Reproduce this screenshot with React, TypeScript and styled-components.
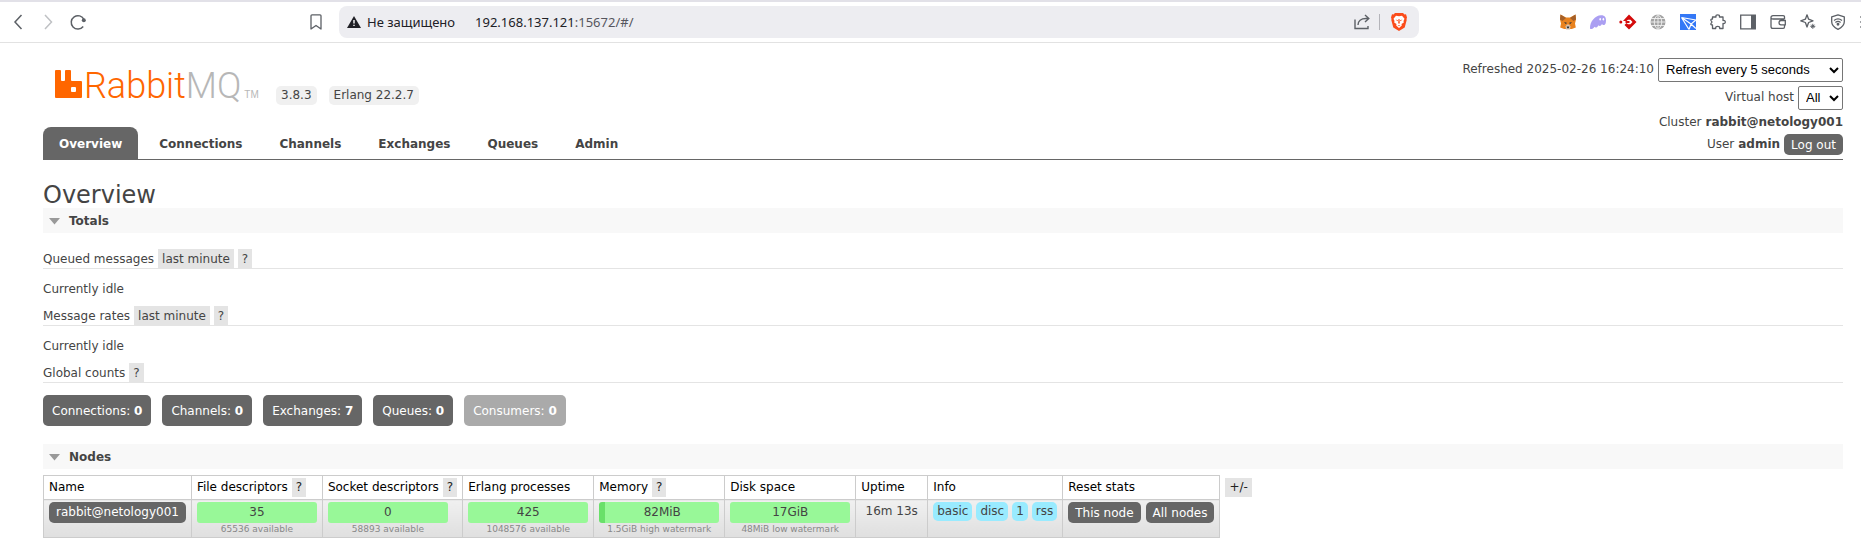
import React from "react";
import styled, { createGlobalStyle, css } from "styled-components";

const GlobalStyle = createGlobalStyle`
  *, *::before, *::after { box-sizing: border-box; }
  body {
    margin: 0;
    background: #fff;
    color: #444;
    font: 12px/19px Verdana, "DejaVu Sans", sans-serif;
  }
  button, select { font: inherit; margin: 0; }
  h1, h2, h3, p { margin: 0; font-weight: normal; }
`;

/* Browser toolbar */

const Toolbar = styled.div`
  display: flex;
  align-items: center;
  height: 43px;
  padding-left: 8px;
  border-top: 2px solid #e2e1e8;
  border-bottom: 1px solid #e2e2e2;
  background: #fff;
  overflow: hidden;
`;

const NavGroup = styled.div`
  display: flex;
  gap: 10px;
  flex: 0 0 auto;
`;

const IconButton = styled.button`
  display: flex;
  align-items: center;
  justify-content: center;
  flex: 0 0 auto;
  width: 20px;
  height: 20px;
  padding: 0;
  border: 0;
  background: none;
  color: #5c6066;
  &:disabled { color: #bfc1c4; }
`;

const AddressArea = styled.div`
  display: flex;
  flex: 0 1 1113px;
  align-items: center;
  gap: 13px;
  min-width: 0;
  margin-left: auto;
`;

const AddressBar = styled.div`
  display: flex;
  flex: 1;
  align-items: center;
  height: 32px;
  padding: 0 10px 0 8px;
  border-radius: 8px;
  background: #ededf1;
  color: #202026;
  font: 13px/20px "Noto Sans", "Open Sans", sans-serif;
`;

const Security = styled.span`
  display: flex;
  align-items: center;
  gap: 6px;
  margin-right: 20px;
`;

const Url = styled.span`
  flex: 1;
  color: #56565e;
  b { font-weight: normal; color: #202026; }
`;

const BarDivider = styled.span`
  width: 1px;
  height: 16px;
  margin: 0 9px 0 7px;
  background: #b4b4ba;
`;

const Extensions = styled.div`
  display: flex;
  gap: 10px;
  flex: 0 0 auto;
  margin-left: 139px;
  margin-right: -17px;
`;

/* Management page */

const Page = styled.div`
  padding: 14px 18px 21px 43px;
`;

const Header = styled.header`
  display: flex;
  justify-content: space-between;
  height: 103px;
  border-bottom: 1px solid #666;
`;

const Brand = styled.div`
  display: flex;
  flex-direction: column;
  justify-content: space-between;
`;

const BrandRow = styled.div`
  display: flex;
  align-items: flex-end;
  height: 48px;
  padding-left: 12px;
  gap: 12px;
`;

const Logo = styled.a`
  display: flex;
  align-items: baseline;
  width: 209px;
  height: 48px;
  color: #f60;
  text-decoration: none;
  font: 300 36px/58px Roboto, sans-serif;
  svg { flex: 0 0 auto; margin-right: 2px; }
  span { color: #b7b7b7; }
  small { margin-left: 3px; color: #b7b7b7; font: 10px/22px "Liberation Sans", sans-serif; }
`;

const Version = styled.abbr`
  padding: 0 5px;
  border-radius: 5px;
  background: #f0f0f0;
`;

const Tabs = styled.nav`
  display: flex;
  gap: 5px;
`;

const Tab = styled.a<{ $active?: boolean }>`
  padding: 8px 16px 5px;
  border-radius: 8px 8px 0 0;
  color: ${(p) => (p.$active ? "#fff" : "#444")};
  background: ${(p) => (p.$active ? "#666" : "none")};
  font-weight: bold;
  text-decoration: none;
`;

const Status = styled.div`
  display: flex;
  flex-direction: column;
  align-items: flex-end;
  gap: 3px;
`;

const StatusRow = styled.div<{ $tight?: boolean }>`
  display: flex;
  align-items: center;
  gap: 4px;
  height: ${(p) => (p.$tight ? 19 : 25)}px;
`;

const Picker = styled.select<{ $width: number }>`
  width: ${(p) => p.$width}px;
  height: 24px;
  padding: 0 3px;
  border: 1px solid #767676;
  border-radius: 2px;
  background: #fff;
  color: #000;
  font: 13px "Liberation Sans", Arial, sans-serif;
`;

const darkButton = css`
  border: 0;
  border-radius: 5px;
  background: #666;
  color: #fff;
  text-decoration: none;
  white-space: nowrap;
`;

const Button = styled.button`
  ${darkButton}
  height: 21px;
  padding: 0 7px;
  line-height: 20px;
`;

const Title = styled.h1`
  padding-top: 22px;
  font-size: 24px;
  line-height: 26px;
`;

const SectionHeading = styled.h2`
  display: flex;
  align-items: center;
  gap: 9px;
  height: 25px;
  padding: 1px 0 0 6px;
  background: #f8f8f8;
  font-size: 12px;
  font-weight: bold;
`;

const SubHeading = styled.h3`
  display: flex;
  gap: 4px;
  height: 20px;
  border-bottom: 1px solid #e4e4e4;
  font-size: 12px;
  line-height: 21px;
`;

const Totals = styled.div`
  padding: 16px 0 18px;
`;

const Idle = styled.p`
  padding: 11px 0 7px;
`;

const Hint = styled.button`
  height: 19px;
  padding: 0 4px;
  border: 0;
  background: #e4e4e4;
  color: #444;
`;

const Counters = styled.div`
  display: flex;
  gap: 11px;
  padding-top: 12px;
`;

const Counter = styled.a<{ $muted?: boolean }>`
  ${darkButton}
  padding: 7px 9px 5px;
  background: ${(p) => (p.$muted ? "#aaa" : "#666")};
`;

const TableRow = styled.div`
  display: flex;
  align-items: flex-start;
  gap: 5px;
  padding-top: 6px;
  > button { margin-top: 3px; color: #222; }
`;

const NodeTable = styled.table`
  border-collapse: collapse;
  th, td {
    padding: 2px 5px;
    border: 1px solid #ccc;
    text-align: left;
    vertical-align: top;
    white-space: nowrap;
  }
  th { height: 24px; color: #000; font-weight: normal; }
  th button { margin-left: 4px; color: #222; }
  td { height: 38px; background: linear-gradient(#f0f0f0, #dfdfdf); }
`;

const NodeLink = styled.a`
  ${darkButton}
  display: block;
  padding: 1px 7px;
`;

const Meter = styled.div`
  width: 120px;
  text-align: center;
  small {
    display: block;
    color: #888;
    font-size: 9px;
    line-height: 12px;
  }
`;

const MeterBar = styled.div<{ $used?: boolean }>`
  padding: 1px 0;
  border-left: ${(p) => (p.$used ? "6px solid #69e069" : "0")};
  border-radius: 3px;
  background: #98f898;
`;

const Uptime = styled.div`
  min-width: 61px;
  text-align: center;
`;

const Inline = styled.div<{ $gap: number }>`
  display: flex;
  gap: ${(p) => p.$gap}px;
`;

const Tag = styled.abbr`
  padding: 0 4px;
  border-radius: 5px;
  background: #99ebff;
`;

const Line = ({ children, w = 1.3 }: { children: React.ReactNode; w?: number }) => (
  <svg width="16" height="16" viewBox="0 0 16 16" fill="none" stroke="currentColor" strokeWidth={w} aria-hidden="true">
    {children}
  </svg>
);

const Triangle = () => (
  <svg width="11" height="7" viewBox="0 0 11 7" aria-hidden="true"><path d="M0 0h11L5.5 6.5z" fill="#999" /></svg>
);

const extensions: [string, React.ReactNode][] = [
  ["MetaMask", (
    <svg width="16" height="16" viewBox="0 0 16 16">
      <path d="M.5.5l5.500 3h4l5.500-3 .5 5-1 4 .8 4-4 1.500H4.200l-4-1.500.8-4-1-4z" fill="#e8821e" />
      <path d="M.5.5L6 4 2.500 7 0 5.500zM15.500.5L10 4l3.500 3L16 5.500z" fill="#a4602a" />
      <path d="M5.500 12.500l1.500-2h2l1.500 2-.5 3H6z" fill="#d8c2ae" />
      <path d="M4 8l2.800.8-.8 1.400zM12 8l-2.800.8.8 1.400zM6.700 12.500h2.600l-.5 1.800H7.200z" fill="#26343d" />
    </svg>
  )],
  ["Phantom", (
    <svg width="18" height="16" viewBox="0 0 18 16">
      <path d="M1 14.500C.8 7.500 6 1.500 12 1.200c3.500-.2 5 2 5 4.800 0 2.500-.3 5-2.300 5-1 0-1.400-.5-1.700-1-1 2-2.500 2.500-3.500 1.200-1.300 2.300-3 3-4 1.500C4.300 14.500 2 15.800 1 14.500z" fill="#ab9ff2" />
      <ellipse cx="11.2" cy="5.200" rx=".8" ry="1.200" fill="#fff" /><ellipse cx="14.4" cy="5.200" rx=".8" ry="1.200" fill="#fff" />
    </svg>
  )],
  ["Red diamond", (
    <svg width="18" height="16" viewBox="0 0 18 16">
      <path fillRule="evenodd" d="M10 .5L17.500 8 10 15.500 5.500 11l2-2L9 10.300h2.500L13.500 8l-2-2.300H9L7.500 7H4z" fill="#d40b0b" />
      <path d="M6.500 7h4v2h-4z" fill="#d40b0b" /><circle cx="1.800" cy="8" r="1.500" fill="#d40b0b" />
    </svg>
  )],
  ["Globe", (
    <svg width="16" height="16" viewBox="0 0 16 16" fill="none">
      <circle cx="8" cy="8" r="7.500" fill="#a2a2a2" />
      <path d="M8 0v16M1 4.500h14M0 8h16M1 11.500h14M8 .5c-5 4-5 11 0 15M8 .5c5 4 5 11 0 15" stroke="#f0f0f0" strokeWidth=".9" />
    </svg>
  )],
  ["Paper plane", (
    <svg width="16" height="16" viewBox="0 0 16 16">
      <path d="M0 0h16v16H0z" fill="#3478f6" />
      <path d="M1.500 3.500L16 6M1.500 3.500L9 15.500M1.500 3.500L11 10M16 6l-5 4-2 5.500M11 10l5 4.500" fill="none" stroke="#fff" strokeWidth="1.200" />
    </svg>
  )],
  ["Extensions", <Line><path d="M2.500 3H6C5.600 1.400 6.500.8 7.700.8S9.800 1.400 9.400 3H13v3.500c1.500-.4 2.300.4 2.300 1.500S14.500 9.900 13 9.500V14.500H9.700c.2-1.500-.8-2.200-2-2.200s-2.200.7-2 2.200H2.500V11C.9 11 .6 10.200 1 9.500L2 8 1 6.500C.6 5.600 1 5 2.500 5z" strokeLinejoin="round" /></Line>],
  ["Sidebar", <Line><path d="M.7 1.200h14.600v13.600H.7z" /><path d="M11 1h4.500v14H11z" fill="currentColor" stroke="none" /></Line>],
  ["Wallet", <Line><path d="M14.500 5V3c0-.8-.5-1.300-1.300-1.300H3C1.700 1.700 1 2.400 1 3.400v9c0 1.200.7 1.900 1.900 1.900h10.300c.8 0 1.300-.5 1.300-1.300v-2M1 3.500C1 4.500 2 5 3 5h11.500M15.300 6.500H11c-1.300 0-2 1-2 2.200s.8 2.100 2 2.100h4.300z" /></Line>],
  ["Leo", <Line><path d="M7 .8l1.600 4.400L13 6.800 8.600 8.500 7 13 5.400 8.500.8 6.800l4.600-1.600z" strokeLinejoin="round" /><path d="M12.800 9.800v5M10.300 12.300h5M11.200 10.700l3.200 3.200M14.400 10.700l-3.200 3.200" strokeWidth="1" /></Line>],
  ["VPN", <Line><path d="M8 .8l6.300 2v5c0 3.500-2.400 5.700-6.300 7.500-3.900-1.800-6.300-4-6.300-7.500v-5z" strokeLinejoin="round" /><path d="M4 6.500c2.500-2 5.500-2 8 0M5.400 8.400c1.700-1.300 3.500-1.300 5.200 0" /><circle cx="8" cy="10.200" r=".8" fill="currentColor" /></Line>],
  ["Menu", <svg width="18" height="16" viewBox="0 0 18 16" stroke="#85888c" strokeWidth="1.3"><path d="M1 3h16M1 8h16M1 13h16" /></svg>],
];

const tabs = ["Overview", "Connections", "Channels", "Exchanges", "Queues", "Admin"];

const counters: [string, number][] = [
  ["Connections", 0], ["Channels", 0], ["Exchanges", 7], ["Queues", 0], ["Consumers", 0],
];

const meters = [
  { title: "File descriptors", help: true, value: "35", note: "65536 available" },
  { title: "Socket descriptors", help: true, value: "0", note: "58893 available" },
  { title: "Erlang processes", value: "425", note: "1048576 available" },
  { title: "Memory", help: true, value: "82MiB", note: "1.5GiB high watermark", used: true },
  { title: "Disk space", value: "17GiB", note: "48MiB low watermark" },
];

const BrowserToolbar = () => (
  <Toolbar>
    <NavGroup>
      <IconButton aria-label="Back"><Line w={1.5}><path d="M11.500 1L5 8l6.500 7" /></Line></IconButton>
      <IconButton aria-label="Forward" disabled><Line w={1.5}><path d="M5 1l6.500 7L5 15" /></Line></IconButton>
      <IconButton aria-label="Reload"><Line w={1.5}><path d="M13.200 12.500A6.700 6.700 0 1 1 14 5.500" /><circle cx="13.800" cy="6.300" r="2" fill="currentColor" stroke="none" /></Line></IconButton>
    </NavGroup>
    <AddressArea>
      <IconButton aria-label="Bookmark"><Line><path d="M3 1.800c0-.6.400-1 1-1h8c.6 0 1 .4 1 1V15l-5-3.500L3 15z" strokeLinejoin="round" /></Line></IconButton>
      <AddressBar>
        <Security>
          <svg width="14" height="12" viewBox="0 0 14 12" aria-hidden="true"><path d="M7 0l7 12H0z" fill="#202026" /><path d="M6.300 4h1.400v3.500H6.300zM6.300 8.700h1.400V10H6.300z" fill="#fff" /></svg>
          Не защищено
        </Security>
        <Url><b>192.168.137.121</b>:15672/#/</Url>
        <IconButton aria-label="Share"><Line w={1.4}><path d="M1 5.500v9h13V12M4 11c0-4 3-6.500 8-6.500h2.500M11 1l3.800 3.500L11 8" /></Line></IconButton>
        <BarDivider />
        <IconButton aria-label="Brave Shields">
          <svg width="16" height="18" viewBox="0 0 16 18">
            <path d="M4 0h8l1.500 1.500L15 1.300l1 3.200-.5 1.500.2 1-2 7.500L8 18l-5.700-3.500L.3 7l.2-1L0 4.500l1-3.200 1.500.2z" fill="#fb4c1b" />
            <path d="M8 3.200l3-.5 2.500 3-1 2.300.3 1.500-2.300 1.500.3 1.500L8 15l-2.800-2.500.3-1.500-2.300-1.500.3-1.500-1-2.300 2.500-3z" fill="#fff" />
            <path d="M4.500 6.500l2.500.8-.5 1zM11.500 6.500L9 7.300l.5 1zM7.500 6h1l.3 4L8 11l-.8-1zM6.500 12.200h3L8 13.300z" fill="#fb4c1b" />
          </svg>
        </IconButton>
      </AddressBar>
    </AddressArea>
    <Extensions>
      {extensions.map(([name, icon]) => <IconButton key={name} aria-label={name}>{icon}</IconButton>)}
    </Extensions>
  </Toolbar>
);

export default function App() {
  return (
    <>
      <GlobalStyle />
      <BrowserToolbar />
      <Page>
        <Header>
          <Brand>
            <BrandRow>
              <Logo href="#/">
                <svg width="27" height="28" viewBox="0 0 27 28" aria-hidden="true">
                  <path fillRule="evenodd" d="M1 0h4q1 0 1 1v9q0 1 1 1h2q1 0 1-1V1q0-1 1-1h4q1 0 1 1v9q0 1 1 1h9q1 0 1 1v15q0 1-1 1H1q-1 0-1-1V1q0-1 1-1zM17 17q-1 0-1 1v3q0 1 1 1h3q1 0 1-1v-3q0-1-1-1z" fill="#f60" />
                </svg>
                Rabbit<span>MQ</span><small>TM</small>
              </Logo>
              <Version>3.8.3</Version>
              <Version>Erlang 22.2.7</Version>
            </BrandRow>
            <Tabs>
              {tabs.map((t, i) => <Tab key={t} href="#/" $active={i === 0}>{t}</Tab>)}
            </Tabs>
          </Brand>
          <Status>
            <StatusRow>
              <label htmlFor="refresh">Refreshed 2025-02-26 16:24:10</label>
              <Picker id="refresh" $width={185}><option>Refresh every 5 seconds</option></Picker>
            </StatusRow>
            <StatusRow>
              <label htmlFor="vhost">Virtual host</label>
              <Picker id="vhost" $width={45}><option>All</option></Picker>
            </StatusRow>
            <StatusRow $tight>Cluster <b>rabbit@netology001</b></StatusRow>
            <StatusRow $tight>User <b>admin</b> <Button>Log out</Button></StatusRow>
          </Status>
        </Header>

        <main>
          <Title>Overview</Title>
          <SectionHeading><Triangle />Totals</SectionHeading>
          <Totals>
            <SubHeading>Queued messages <Hint>last minute</Hint><Hint>?</Hint></SubHeading>
            <Idle>Currently idle</Idle>
            <SubHeading>Message rates <Hint>last minute</Hint><Hint>?</Hint></SubHeading>
            <Idle>Currently idle</Idle>
            <SubHeading>Global counts <Hint>?</Hint></SubHeading>
            <Counters>
              {counters.map(([name, n]) => (
                <Counter key={name} href="#/" $muted={name === "Consumers"}>{name}: <b>{n}</b></Counter>
              ))}
            </Counters>
          </Totals>

          <SectionHeading><Triangle />Nodes</SectionHeading>
          <TableRow>
            <NodeTable>
              <thead>
                <tr>
                  <th>Name</th>
                  {meters.map((m) => <th key={m.title}>{m.title}{m.help && <Hint>?</Hint>}</th>)}
                  <th>Uptime</th>
                  <th>Info</th>
                  <th>Reset stats</th>
                </tr>
              </thead>
              <tbody>
                <tr>
                  <td><NodeLink href="#/">rabbit@netology001</NodeLink></td>
                  {meters.map((m) => (
                    <td key={m.title}>
                      <Meter><MeterBar $used={m.used}>{m.value}</MeterBar><small>{m.note}</small></Meter>
                    </td>
                  ))}
                  <td><Uptime>16m 13s</Uptime></td>
                  <td><Inline $gap={4}><Tag>basic</Tag><Tag>disc</Tag><Tag>1</Tag><Tag>rss</Tag></Inline></td>
                  <td><Inline $gap={5}><Button>This node</Button><Button>All nodes</Button></Inline></td>
                </tr>
              </tbody>
            </NodeTable>
            <Hint>+/-</Hint>
          </TableRow>
        </main>
      </Page>
    </>
  );
}
